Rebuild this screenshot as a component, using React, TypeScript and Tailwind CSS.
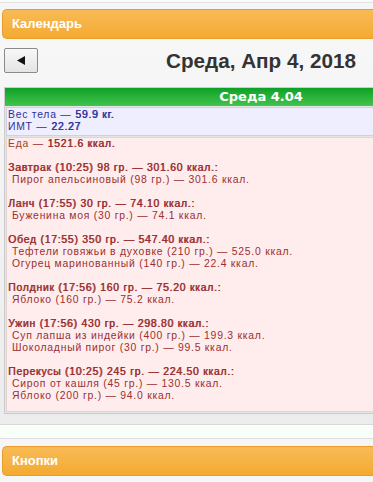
import React from "react"

const meals = [
  {
    head: "Завтрак (10:25) 98 гр. — 301.60 ккал.:",
    items: ["Пирог апельсиновый (98 гр.) — 301.6 ккал."],
  },
  {
    head: "Ланч (17:55) 30 гр. — 74.10 ккал.:",
    items: ["Буженина моя (30 гр.) — 74.1 ккал."],
  },
  {
    head: "Обед (17:55) 350 гр. — 547.40 ккал.:",
    items: ["Тефтели говяжьи в духовке (210 гр.) — 525.0 ккал.", "Огурец маринованный (140 гр.) — 22.4 ккал."],
  },
  {
    head: "Полдник (17:56) 160 гр. — 75.20 ккал.:",
    items: ["Яблоко (160 гр.) — 75.2 ккал."],
  },
  {
    head: "Ужин (17:56) 430 гр. — 298.80 ккал.:",
    items: ["Суп лапша из индейки (400 гр.) — 199.3 ккал.", "Шоколадный пирог (30 гр.) — 99.5 ккал."],
  },
  {
    head: "Перекусы (10:25) 245 гр. — 224.50 ккал.:",
    items: ["Сироп от кашля (45 гр.) — 130.5 ккал.", "Яблоко (200 гр.) — 94.0 ккал."],
  },
]

const dejavu = "font-['DejaVu_Sans',Verdana,sans-serif]"
const arial = "font-['Liberation_Sans',Arial,sans-serif]"
// heavier text that keeps the regular advance widths
const heavy = "[text-shadow:0.6px_0_0_currentColor]"

function PanelHeader({ title }: { title: string }) {
  return (
    <div className={`ml-[2px] h-[30px] flex items-center pl-[9px] rounded-l-[5px] border border-r-0 border-[#e99b2c] bg-gradient-to-b from-[#f8bb55] to-[#f4aa30] text-white text-[13px] font-bold ${arial}`}>
      {title}
    </div>
  )
}

export default function App() {
  return (
    <div className="w-[373px] h-[482px] overflow-hidden bg-[#f6f6f6]">
      <div className="h-[3px] bg-[#fbfbfb] border-b border-[#e2e2e2]" />
      <div className="pt-[6px]">
        <PanelHeader title="Календарь" />
      </div>

      <div className="mt-[2px] bg-gradient-to-b from-[#f7f7f7] to-[#ececec] border-b border-[#d8d8d8] pt-[7px] pl-[4px] pb-[10px] w-[373px] overflow-hidden">
        <div className="w-[514px]">
          <div className="flex items-start h-[25px]">
            <button className="w-[34px] h-[25px] border border-[#8a8a8a] rounded-[2px] bg-gradient-to-b from-[#f8f8f8] to-[#e4e4e4] flex items-center justify-center">
              <svg width="10" height="11" viewBox="0 0 10 11">
                <path d="M1 5.5 L9 1 L9 10 Z" fill="#111" />
              </svg>
            </button>
            <div className={`flex-1 pr-[34px] text-center pt-[1px] text-[20.7px] leading-[24px] font-bold text-[#333] ${arial}`}>
              Среда, Апр 4, 2018
            </div>
          </div>

          <div className="mt-[14px] border border-[#cccccc] bg-[#e4e4e4]">
            <div className={`h-[18px] flex items-center justify-center bg-gradient-to-b from-[#0aa126] to-[#3fc44e] text-white text-[13px] font-bold ${dejavu}`}>
              Среда 4.04
            </div>
            <div className={`px-[1px] pt-[1px] pb-[1px] text-[10.4px] leading-[12px] tracking-[0.75px] ${arial}`}>
              <div className="border border-[#d0d0e4] bg-[#eeeeff] text-[#30309a] px-[1px] pt-[1px] pb-[2px]">
                <div className="h-[12px]">
                  Вес тела — <span className={heavy}>59.9 кг.</span>
                </div>
                <div className="h-[12px]">
                  ИМТ — <span className={heavy}>22.27</span>
                </div>
              </div>
              <div className="mt-[1px] border border-[#e0d4d4] bg-[#ffeded] text-[#9a2f2f] px-[1px] pt-0 pb-[9px]">
                <div className="h-[12px]">
                  <span className="text-[#a3401f]">Еда</span> — <span className={heavy}>1521.6 ккал.</span>
                </div>
                {meals.map((m) => (
                  <div key={m.head} className="pt-[12px]">
                    <div className={`h-[12px] ${heavy}`}>{m.head}</div>
                    {m.items.map((it) => (
                      <div key={it} className="h-[12px] pl-[4px]">
                        {it}
                      </div>
                    ))}
                  </div>
                ))}
              </div>
            </div>
          </div>
        </div>
      </div>

      <div className="h-[14px] bg-[#f8fff8] border-b border-[#dedede]" />
      <div className="pt-[7px]">
        <PanelHeader title="Кнопки" />
      </div>
    </div>
  )
}
